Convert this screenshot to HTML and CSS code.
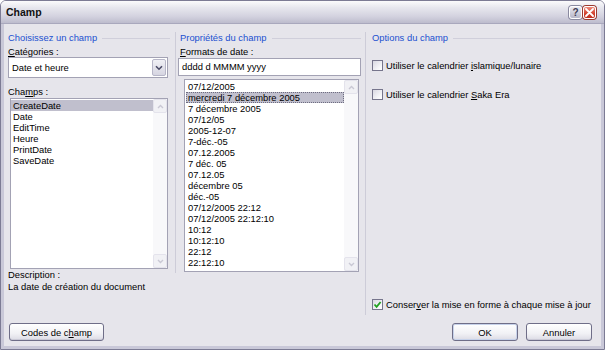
FILE: index.html
```html
<!DOCTYPE html>
<html lang="fr">
<head>
    <meta charset="UTF-8" />
    <title>Champ</title>
    <link rel="stylesheet" href="styles.css">
</head>
<body>
    <div class="window">
        <div class="titlebar">
            <span class="title">Champ</span>
            <div class="caption-buttons">
                <span class="cap-btn cap-help">?</span>
                <span class="cap-btn cap-close">
                    <svg width="9" height="9" viewBox="0 0 9 9"><path d="M1 1 L8 8 M8 1 L1 8" stroke="#fff" stroke-width="1.8" stroke-linecap="round"/></svg>
                </span>
            </div>
        </div>

        <div class="client">
            <div class="panes">
                <!-- Choisissez un champ -->
                <div class="pane pane-field">
                    <div class="group-title">Choisissez un champ</div>
                    <div class="label"><u>C</u>atégories :</div>
                    <div class="combo">
                        <span class="combo-text">Date et heure</span>
                        <span class="combo-btn">
                            <svg width="8" height="6" viewBox="0 0 8 6"><path d="M1 1.2 L4 4.2 L7 1.2" fill="none" stroke="#4a4a66" stroke-width="1.6"/></svg>
                        </span>
                    </div>
                    <div class="label label-gap">Cha<u>m</u>ps :</div>
                    <div class="listbox list-fields">
                        <ul class="items">
                            <li class="selected">CreateDate</li>
                            <li>Date</li>
                            <li>EditTime</li>
                            <li>Heure</li>
                            <li>PrintDate</li>
                            <li>SaveDate</li>
                        </ul>
                        <div class="scrollbar">
                            <span class="scroll-arrow"><svg width="7" height="5" viewBox="0 0 7 5"><path d="M1 4 L3.5 1.5 L6 4" fill="none" stroke="#c9c8d4" stroke-width="1.4"/></svg></span>
                            <span class="scroll-arrow"><svg width="7" height="5" viewBox="0 0 7 5"><path d="M1 1 L3.5 3.5 L6 1" fill="none" stroke="#c9c8d4" stroke-width="1.4"/></svg></span>
                        </div>
                    </div>
                    <div class="label desc-label">Description :</div>
                    <div class="desc">La date de création du document</div>
                </div>

                <!-- Propriétés du champ -->
                <div class="pane pane-props">
                    <div class="group-title">Propriétés du champ</div>
                    <div class="label"><u>F</u>ormats de date :</div>
                    <div class="textbox">dddd d MMMM yyyy</div>
                    <div class="listbox list-formats">
                        <ul class="items">
                            <li>07/12/2005</li>
                            <li class="selected focused">mercredi 7 décembre 2005</li>
                            <li>7 décembre 2005</li>
                            <li>07/12/05</li>
                            <li>2005-12-07</li>
                            <li>7-déc.-05</li>
                            <li>07.12.2005</li>
                            <li>7 déc. 05</li>
                            <li>07.12.05</li>
                            <li>décembre 05</li>
                            <li>déc.-05</li>
                            <li>07/12/2005 22:12</li>
                            <li>07/12/2005 22:12:10</li>
                            <li>10:12</li>
                            <li>10:12:10</li>
                            <li>22:12</li>
                            <li>22:12:10</li>
                        </ul>
                        <div class="scrollbar">
                            <span class="scroll-arrow"><svg width="7" height="5" viewBox="0 0 7 5"><path d="M1 4 L3.5 1.5 L6 4" fill="none" stroke="#c9c8d4" stroke-width="1.4"/></svg></span>
                            <span class="scroll-arrow"><svg width="7" height="5" viewBox="0 0 7 5"><path d="M1 1 L3.5 3.5 L6 1" fill="none" stroke="#c9c8d4" stroke-width="1.4"/></svg></span>
                        </div>
                    </div>
                </div>

                <!-- Options du champ -->
                <div class="pane pane-options">
                    <div class="group-title">Options du champ</div>
                    <div class="check-row first">
                        <span class="checkbox"></span>
                        <span>Utiliser le calendrier <u>i</u>slamique/lunaire</span>
                    </div>
                    <div class="check-row">
                        <span class="checkbox"></span>
                        <span>Utiliser le calendrier <u>S</u>aka Era</span>
                    </div>
                    <div class="check-row bottom">
                        <span class="checkbox checked">
                            <svg width="9" height="9" viewBox="0 0 9 9"><path d="M1.5 4.5 L3.6 6.8 L7.6 2" fill="none" stroke="#21a121" stroke-width="1.8"/></svg>
                        </span>
                        <span>Conser<u>v</u>er la mise en forme à chaque mise à jour</span>
                    </div>
                </div>
            </div>

            <div class="footer">
                <button class="btn btn-codes">Codes de c<u>h</u>amp</button>
                <div class="footer-right">
                    <button class="btn btn-ok">OK</button>
                    <button class="btn">Annuler</button>
                </div>
            </div>
        </div>
    </div>
</body>
</html>
```

FILE: styles.css
```css
:root {
    --fond: #e6e5eb;
    --cadre: #c9c8d8;
    --bordure: #a3a2b4;
    --titre-groupe: #2150d0;
    --selection: #c0bfcd;
}

* {
    margin: 0;
    padding: 0;
    box-sizing: border-box;
}

body {
    width: 605px;
    height: 350px;
    font-family: 'Liberation Sans', Arial, sans-serif;
    font-size: 9.4px;
    color: #000;
    background: #fff;
    overflow: hidden;
}

u {
    text-decoration: underline;
    text-underline-offset: 1px;
}

.window {
    width: 605px;
    height: 350px;
    border: 1px solid #7c7b94;
    border-radius: 6px 6px 0 0;
    overflow: hidden;
    display: flex;
    flex-direction: column;
}

/* barre de titre */
.titlebar {
    height: 23px;
    flex-shrink: 0;
    display: flex;
    align-items: center;
    justify-content: space-between;
    padding: 0 8px 0 5px;
    background: linear-gradient(#fbfbfc 0%, #e7e7ee 30%, #d3d2df 70%, #bdbccd 100%);
    border-bottom: 1px solid #a9a8bd;
}

.title {
    font-size: 10.5px;
    font-weight: 700;
    color: #111;
}

.caption-buttons {
    display: flex;
    gap: 1px;
}

.cap-btn {
    width: 13px;
    height: 13px;
    border-radius: 3px;
    display: flex;
    align-items: center;
    justify-content: center;
    border: 1px solid #fff;
    box-shadow: 0 0 0 1px #8a8aa0;
}

.cap-help {
    background: linear-gradient(#e9e9f0, #b7b7c9);
    color: #3c3c55;
    font-weight: 700;
    font-size: 10px;
}

.cap-close {
    background: linear-gradient(#ee8a7c, #d2432f 60%, #c0301f);
    box-shadow: 0 0 0 1px #9b3a30;
}

/* zone cliente */
.client {
    flex: 1;
    background: var(--fond);
    border: 3px solid var(--cadre);
    border-top: none;
    display: flex;
    flex-direction: column;
}

.panes {
    display: flex;
    align-items: flex-start;
    padding-top: 8px;
}

.pane {
    display: flex;
    flex-direction: column;
}

.pane-field {
    width: 171px;
    padding: 0 7px 0 4px;
}

.pane-props {
    width: 190px;
    padding: 0 4px 1px 2px;
    border-left: 1px solid #cdccd8;
}

.pane-props .group-title,
.pane-props .label {
    margin-left: 2px;
}

.pane-options {
    flex: 1;
    height: 283px;
    padding: 0 8px 4px 6px;
    border-left: 1px solid #cdccd8;
}

.group-title {
    height: 12px;
    line-height: 12px;
    color: var(--titre-groupe);
    display: flex;
    align-items: center;
    white-space: nowrap;
}

.group-title::after {
    content: "";
    flex: 1;
    height: 1px;
    margin: 1px 0 0 5px;
    background: #d0cfdb;
}

.pane-field .group-title::after {
    margin-right: -2px;
}

.pane-options .group-title::after {
    margin-right: 3px;
}

.label {
    margin-top: 2px;
    height: 11px;
    line-height: 11px;
    white-space: nowrap;
}

.label-gap {
    margin-top: 8px;
}

/* liste déroulante */
.combo {
    height: 21px;
    border: 1px solid var(--bordure);
    background: #fff;
    display: flex;
    align-items: center;
    justify-content: space-between;
    padding: 1px;
}

.combo-text {
    padding-left: 2px;
}

.combo-btn {
    width: 14px;
    height: 17px;
    border: 1px solid #b7b6c8;
    border-radius: 2px;
    background: linear-gradient(#f0f0f5, #d6d5e1);
    display: flex;
    align-items: center;
    justify-content: center;
}

.textbox {
    margin-top: 1px;
    height: 18px;
    line-height: 16px;
    border: 1px solid var(--bordure);
    background: #fff;
    padding-left: 3px;
}

/* listes */
.listbox {
    border: 1px solid var(--bordure);
    background: #fff;
    display: flex;
}

.list-fields {
    margin: 1px 0 0 2px;
    height: 171px;
}

.list-formats {
    margin: 3px 2px 0 6px;
    height: 193px;
}

.items {
    list-style: none;
    flex: 1;
    padding-top: 1px;
}

.items li {
    height: 11px;
    line-height: 11px;
    padding-left: 2px;
    white-space: nowrap;
}

.list-formats .items {
    padding-left: 1px;
}

.items li.selected {
    background: var(--selection);
}

.items li.focused {
    outline: 1px dotted #6d6c80;
    outline-offset: -1px;
}

.scrollbar {
    width: 14px;
    background: #f8f8fa;
    display: flex;
    flex-direction: column;
    justify-content: space-between;
}

.scroll-arrow {
    height: 14px;
    border: 1px solid #e4e3ec;
    border-radius: 2px;
    background: #f1f1f5;
    display: flex;
    align-items: center;
    justify-content: center;
}

.desc-label {
    margin-top: 0;
    height: 12px;
    line-height: 12px;
}

.desc {
    height: 12px;
    line-height: 12px;
    white-space: nowrap;
}

/* cases à cocher */
.check-row {
    display: flex;
    align-items: center;
    gap: 3px;
    height: 13px;
    white-space: nowrap;
}

.check-row.first {
    margin-top: 15px;
}

.check-row + .check-row {
    margin-top: 16px;
}

.check-row.bottom {
    margin-top: auto;
}

.checkbox {
    width: 11px;
    height: 11px;
    border: 1px solid #76758c;
    background: linear-gradient(135deg, #d9d8e2, #f6f6f9 70%, #fff);
    display: flex;
    align-items: center;
    justify-content: center;
}

/* boutons */
.footer {
    display: flex;
    justify-content: space-between;
    align-items: center;
    margin-top: 8px;
    padding: 0 9px 0 5px;
}

.footer-right {
    display: flex;
    gap: 8px;
}

.btn {
    height: 18px;
    width: 66px;
    font-family: inherit;
    font-size: inherit;
    color: #000;
    border: 1px solid #6f6e88;
    border-radius: 3px;
    background: linear-gradient(#ffffff, #f1f1f5 60%, #dcdbe5);
    box-shadow: inset 0 -1px 0 #cac9d6;
}

.btn-codes {
    width: 95px;
}

.btn-ok {
    box-shadow: inset 0 0 0 1px #c7d2ea;
}
```
